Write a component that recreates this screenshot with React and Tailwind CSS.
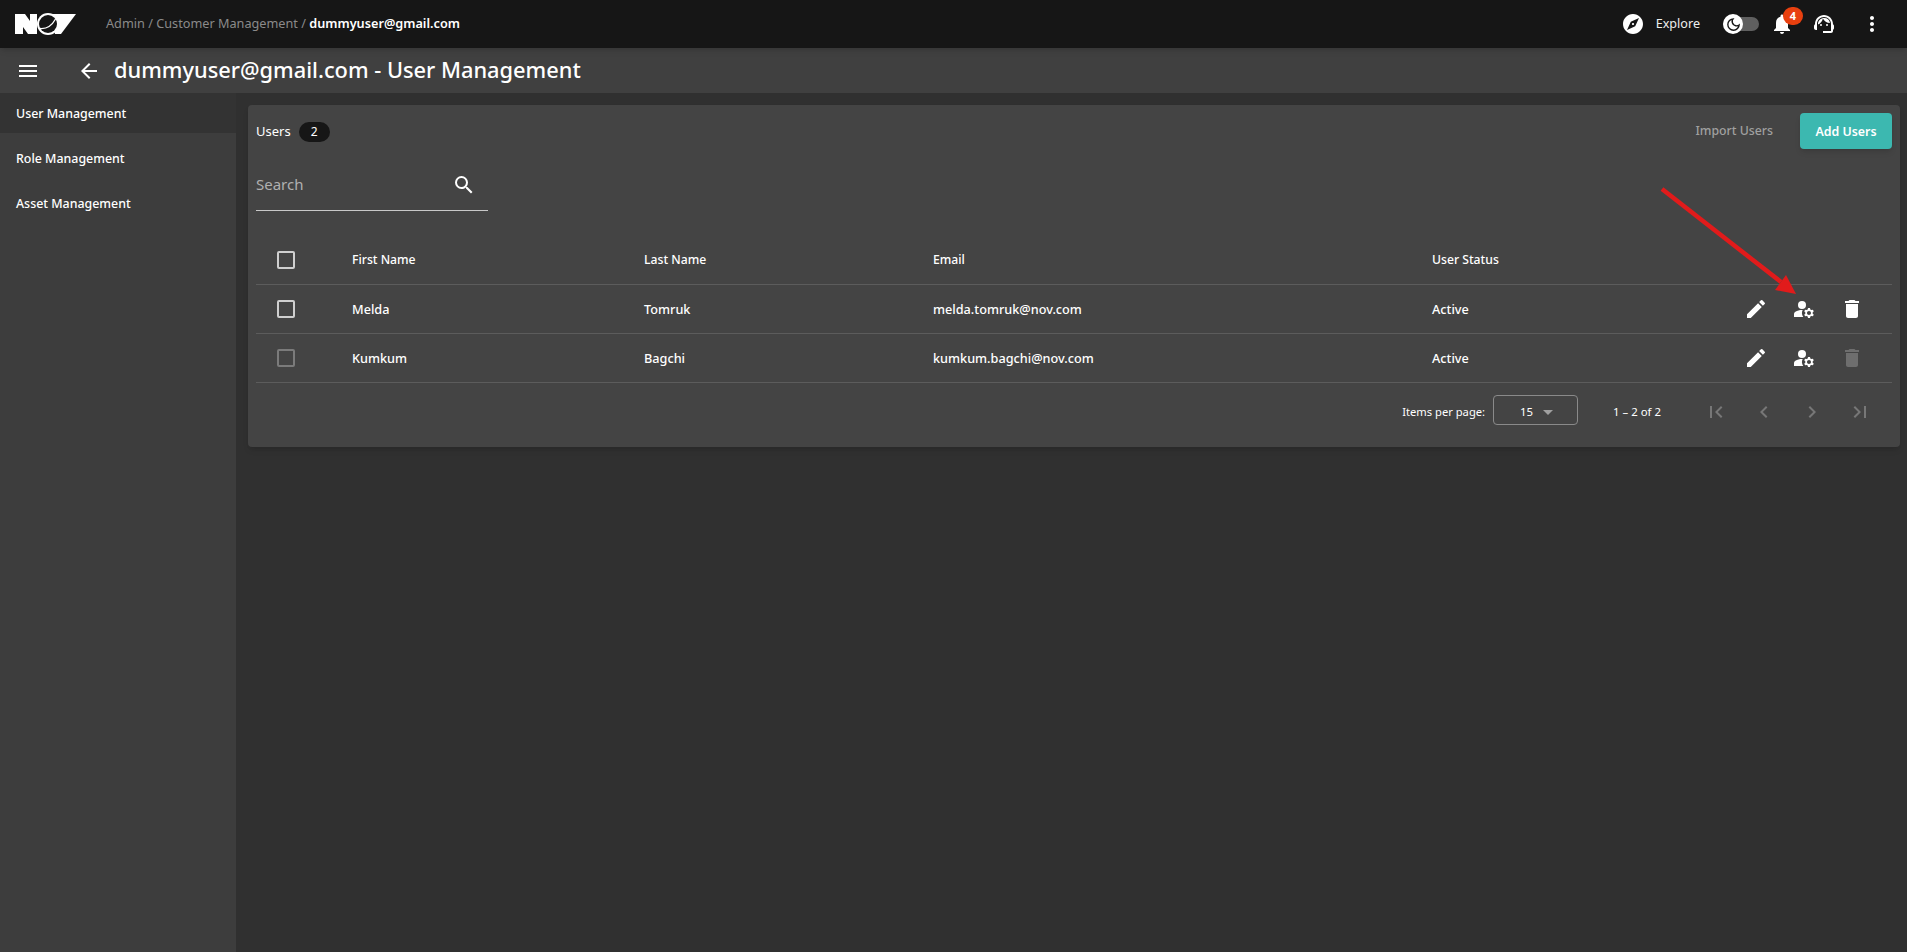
import React from 'react';
import {
    MdMenu, MdArrowBack, MdSearch, MdEdit, MdManageAccounts, MdDelete, MdMoreVert,
    MdNotifications, MdExplore, MdFirstPage, MdChevronLeft, MdChevronRight, MdLastPage,
    MdArrowDropDown, MdOutlineDarkMode, MdSupportAgent,
} from 'react-icons/md';

const users = [
    { first: 'Melda', last: 'Tomruk', email: 'melda.tomruk@nov.com', status: 'Active', canDelete: true },
    { first: 'Kumkum', last: 'Bagchi', email: 'kumkum.bagchi@nov.com', status: 'Active', canDelete: false },
];

const NovLogo = () => (
    <svg width="62" height="22" viewBox="0 0 62 22" className="shrink-0">
        <path d="M0 1h10l5 7V1h7v20h-9l-5-7v7H0z" fill="#fff" />
        <path d="M36 1h25L46 21h-6z" fill="#fff" />
        <circle cx="33" cy="11" r="11" fill="#fff" />
        <circle cx="33" cy="11" r="9" fill="#161616" />
        <path d="M25 15.5c6 .5 12-3 15.5-9.5" stroke="#fff" strokeWidth="1.3" fill="none" />
    </svg>
);

const Checkbox = ({ dim }) => (
    <div className={`w-[18px] h-[18px] rounded-[2px] border-2 ${dim ? 'border-[#7b7b7b]' : 'border-[#cfcfcf]'}`} />
);

const Row = ({ children, className = '' }) => (
    <div className={`flex items-center border-b border-[#5c5c5c] font-medium text-white ${className}`}>
        <div className="w-[96px] pl-[21px]">{children[0]}</div>
        <div className="w-[292px] pt-[2px]">{children[1]}</div>
        <div className="w-[289px] pt-[2px]">{children[2]}</div>
        <div className="w-[499px] pt-[2px]">{children[3]}</div>
        <div className="flex-1 pt-[2px]">{children[4]}</div>
        <div className="w-[148px] flex items-center">{children[5]}</div>
    </div>
);

const App = () => {
    return (
        <div className="relative h-[952px] flex flex-col bg-[#303030] font-['Noto_Sans',sans-serif] overflow-hidden">
            <header className="h-[48px] shrink-0 flex items-center bg-[#161616] pl-[15px] pr-[23px] shadow-md z-10">
                <NovLogo />
                <div className="ml-[29px] text-[12.7px] text-[#8a8a8a]">
                    Admin / Customer Management / <span className="font-semibold text-white">dummyuser@gmail.com</span>
                </div>
                <div className="ml-auto flex items-center text-white">
                    <MdExplore size={24} />
                    <span className="ml-[11px] text-[12.6px] text-[#eee]">Explore</span>
                    <div className="relative ml-[23px] w-[36px] h-[14px] rounded-full bg-[#5f5f5f]">
                        <div className="absolute left-0 top-[-3px] w-[20px] h-[20px] rounded-full bg-white flex items-center justify-center">
                            <MdOutlineDarkMode size={17} className="text-[#161616]" />
                        </div>
                    </div>
                    <div className="relative ml-[11px]">
                        <MdNotifications size={24} />
                        <span className="absolute -top-[5px] left-[13px] w-[20px] h-[18px] rounded-full bg-[#e8400f] text-[11px] font-bold text-white flex items-center justify-center">4</span>
                    </div>
                    <MdSupportAgent size={24} className="ml-[18px]" />
                    <MdMoreVert size={24} className="ml-[24px]" />
                </div>
            </header>

            <div className="h-[45px] shrink-0 flex items-center bg-[#404040] pl-[16px] text-white">
                <MdMenu size={24} />
                <MdArrowBack size={24} className="ml-[37px]" />
                <h1 className="ml-[13px] text-[21.8px] font-medium">dummyuser@gmail.com - User Management</h1>
            </div>

            <div className="flex flex-1 min-h-0">
                <aside className="w-[236px] shrink-0 bg-[#3d3d3d] text-[12.4px] font-medium text-white">
                    <div className="h-[40px] flex items-center px-[16px] pt-[2px] bg-[#333333]">User Management</div>
                    <div className="h-[45px] flex items-center px-[16px] pt-[2px] mt-[3px]">Role Management</div>
                    <div className="h-[45px] flex items-center px-[16px] pt-[2px]">Asset Management</div>
                </aside>

                <main className="flex-1 pt-[12px] pl-[12px] pr-[7px]">
                    <div className="h-[342px] rounded-[4px] bg-[#444444] px-[8px] shadow-md">
                        <div className="h-[52px] flex items-center">
                            <span className="pt-[2px] text-[13px] text-white">Users</span>
                            <span className="ml-[8px] mt-[1px] w-[31px] h-[20px] rounded-full bg-[#161616] text-[12px] text-white flex items-center justify-center">2</span>
                            <span className="ml-auto text-[12.3px] font-medium text-[#a0a0a0]">Import Users</span>
                            <button className="ml-[27px] w-[92px] h-[36px] pt-[2px] rounded-[4px] bg-[#3cb8b0] text-[12.4px] font-semibold text-white shadow-md">Add Users</button>
                        </div>
                        <div className="w-[232px] h-[50px] mt-[4px] pb-[2px] flex items-center justify-between border-b border-[#c8c8c8]">
                            <span className="text-[15px] text-[#b0b0b0]">Search</span>
                            <MdSearch size={24} className="text-white mr-[12px]" />
                        </div>
                        <div className="mt-[24px]">
                            <Row className="h-[50px] text-[12.2px]">
                                <Checkbox />
                                <span>First Name</span>
                                <span>Last Name</span>
                                <span>Email</span>
                                <span>User Status</span>
                                <span />
                            </Row>
                            {users.map((user) => (
                                <Row key={user.email} className="h-[49px] text-[12.7px]">
                                    <Checkbox dim={!user.canDelete} />
                                    <span>{user.first}</span>
                                    <span>{user.last}</span>
                                    <span>{user.email}</span>
                                    <span>{user.status}</span>
                                    <div className="flex items-center gap-[24px]">
                                        <MdEdit size={24} />
                                        <MdManageAccounts size={24} />
                                        <MdDelete size={24} className={user.canDelete ? 'text-white' : 'text-[#6e6e6e]'} />
                                    </div>
                                </Row>
                            ))}
                        </div>
                        <div className="h-[57px] flex items-center justify-end pr-[20px] text-white">
                            <span className="pt-[2px] text-[11.2px]">Items per page:</span>
                            <div className="ml-[8px] mb-[3px] pt-[3px] w-[85px] h-[30px] pl-[26px] rounded-[4px] border border-[#8a8a8a] flex items-center text-[11.4px]">
                                15
                                <MdArrowDropDown size={24} className="ml-[3px] text-[#a0a0a0]" />
                            </div>
                            <span className="ml-[35px] text-[11.4px]">1 – 2 of 2</span>
                            <div className="ml-[43px] flex items-center gap-[24px] text-[#777777]">
                                <MdFirstPage size={24} />
                                <MdChevronLeft size={24} />
                                <MdChevronRight size={24} />
                                <MdLastPage size={24} />
                            </div>
                        </div>
                    </div>
                </main>
            </div>

            {/* annotation arrow drawn over the table */}
            <svg className="absolute left-[1655px] top-[180px]" width="150" height="120" viewBox="0 0 150 120">
                <path d="M7 9L126 102" stroke="#e11b1b" strokeWidth="4.5" fill="none" />
                <path d="M141 114L120 110L131 95Z" fill="#e11b1b" />
            </svg>
        </div>
    );
};

export default App;
